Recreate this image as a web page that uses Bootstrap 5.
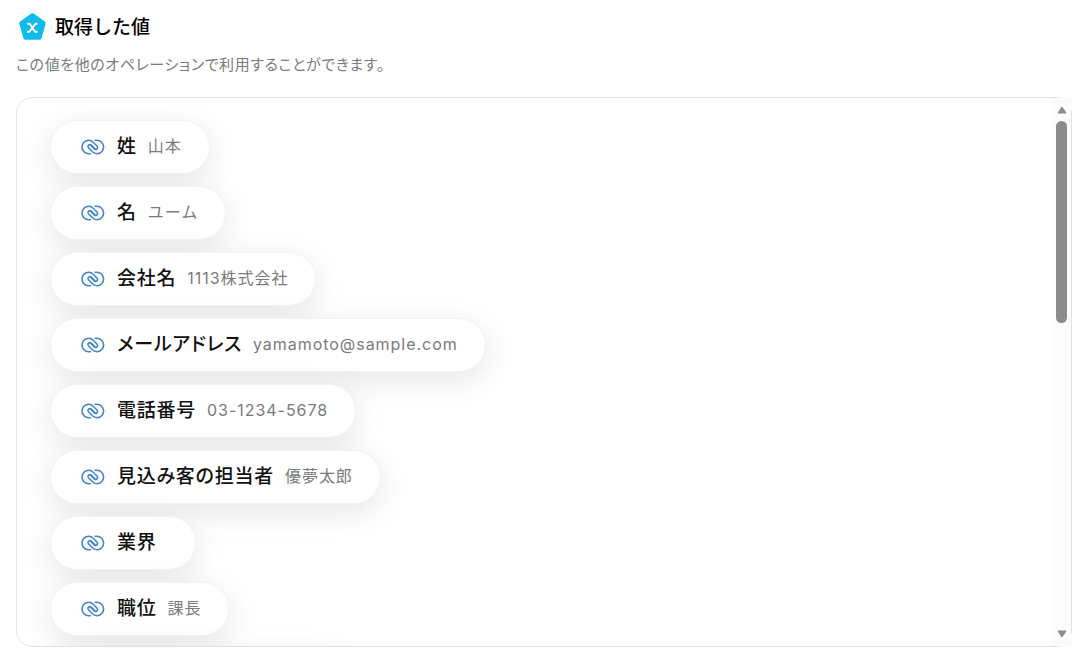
<!DOCTYPE html>
<html lang="ja">
<head>
<meta charset="utf-8">
<meta name="viewport" content="width=device-width, initial-scale=1">
<title>取得した値</title>
<link href="https://cdn.jsdelivr.net/npm/bootstrap@5.3.0/dist/css/bootstrap.min.css" rel="stylesheet">
<style>
  body { font-family: Inter, "Noto Sans CJK JP", sans-serif; color: #1d1d1d; background: #fff; }
  .page { padding: 8px 20px 11px 16px; }
  .page-title { font-size: 19px; line-height: 36px; font-weight: 500; color: #000; }
  .page-title span { padding-top: 2px; }
  .page-note { font-size: 15px; line-height: 22px; color: #7b7b7b; margin: 8px 0 21px; font-feature-settings: "palt"; letter-spacing: .04em; }
  .value-panel { border: 1px solid #e2e2e2; border-radius: 16px; min-height: 0; }
  .value-scroll { overflow-y: auto; scrollbar-width: none; padding: 22px 33px; border-radius: 16px 0 0 16px; min-width: 0; }
  .value-scroll::-webkit-scrollbar { display: none; }
  .value-list { gap: 12px; }
  .value-pill { height: 54px; padding: 0 27px 0 30px; border-radius: 27px; border: 1px solid #f3f3f3; background: #fff; box-shadow: 0 8px 32px rgba(0, 0, 0, .1); white-space: nowrap; }
  .value-pill svg { margin-right: 12px; }
  .value-name { font-size: 19px; line-height: 28px; font-weight: 500; color: #111; margin-right: 11px; font-feature-settings: "palt"; letter-spacing: .04em; }
  .value-data { font-size: 16px; line-height: 26px; color: #7b7b7b; letter-spacing: .06em; padding-bottom: 2px; }
  .value-blank { width: 300px; }
  .scroll-rail { width: 19px; background: #fbfbfb; padding: 8px 0; }
  .scroll-thumb { width: 11px; height: 38%; border-radius: 6px; background: #8b8b8b; margin-top: 7px; }
</style>
</head>
<body>
<svg class="d-none" aria-hidden="true">
  <symbol id="link-icon" viewBox="0 0 24 16">
    <path fill="none" stroke="#4285c8" stroke-width="1.6" stroke-linecap="round" stroke-linejoin="round" d="M9.4 14.7 H7.7 A6.7 6.7 0 0 1 7.7 1.3 C9.5 1.3 11 2 12.2 3.2 L16.2 7.2 A2 2 0 0 1 13.4 10 L9.6 6.2 M14.2 1.3 H15.9 A6.7 6.7 0 0 1 15.9 14.7 C14.1 14.7 12.6 14 11.4 12.8 L7.4 8.8 A2 2 0 0 1 10.2 6 L14 9.8"/>
  </symbol>
</svg>
<main class="page vh-100 d-flex flex-column">
  <header>
    <h1 class="page-title d-flex align-items-center mb-0">
      <svg class="me-2" width="31" height="30" viewBox="0 0 31 30" aria-hidden="true">
        <path d="M16.5 3.2 L27.7 11.1 L23.6 25.8 H9.4 L5.2 11.1 Z" fill="#10bbea" stroke="#10bbea" stroke-width="4" stroke-linejoin="round"/>
        <path d="M11.8 11.8 H13.8 L19 19.8 H20.8 M20.8 11.8 H19.4 L13.2 19.8 H11.8" fill="none" stroke="#fff" stroke-width="1.9" stroke-linecap="round" stroke-linejoin="round"/>
      </svg>
      <span>取得した値</span>
    </h1>
    <p class="page-note">この値を他のオペレーションで利用することができます。</p>
  </header>
  <section class="value-panel flex-grow-1 d-flex" aria-label="取得した値">
    <div class="value-scroll flex-grow-1">
      <ul class="value-list list-unstyled d-flex flex-column align-items-start mb-0">
        <li class="value-pill d-flex align-items-center flex-shrink-0"><svg width="24" height="16" aria-hidden="true"><use href="#link-icon"/></svg><span class="value-name">姓</span><span class="value-data">山本</span></li>
        <li class="value-pill d-flex align-items-center flex-shrink-0"><svg width="24" height="16" aria-hidden="true"><use href="#link-icon"/></svg><span class="value-name">名</span><span class="value-data">ユーム</span></li>
        <li class="value-pill d-flex align-items-center flex-shrink-0"><svg width="24" height="16" aria-hidden="true"><use href="#link-icon"/></svg><span class="value-name">会社名</span><span class="value-data">1113株式会社</span></li>
        <li class="value-pill d-flex align-items-center flex-shrink-0"><svg width="24" height="16" aria-hidden="true"><use href="#link-icon"/></svg><span class="value-name">メールアドレス</span><span class="value-data">yamamoto@sample.com</span></li>
        <li class="value-pill d-flex align-items-center flex-shrink-0"><svg width="24" height="16" aria-hidden="true"><use href="#link-icon"/></svg><span class="value-name">電話番号</span><span class="value-data">03-1234-5678</span></li>
        <li class="value-pill d-flex align-items-center flex-shrink-0"><svg width="24" height="16" aria-hidden="true"><use href="#link-icon"/></svg><span class="value-name">見込み客の担当者</span><span class="value-data">優夢太郎</span></li>
        <li class="value-pill d-flex align-items-center flex-shrink-0"><svg width="24" height="16" aria-hidden="true"><use href="#link-icon"/></svg><span class="value-name">業界</span><span class="value-data"></span></li>
        <li class="value-pill d-flex align-items-center flex-shrink-0"><svg width="24" height="16" aria-hidden="true"><use href="#link-icon"/></svg><span class="value-name">職位</span><span class="value-data">課長</span></li>
        <li class="value-pill value-blank flex-shrink-0"></li>
      </ul>
    </div>
    <div class="scroll-rail d-flex flex-column align-items-center" aria-hidden="true">
      <svg width="10" height="8" viewBox="0 0 10 8"><path d="M5 1 L9 7 H1 Z" fill="#8b8b8b" stroke="#8b8b8b" stroke-linejoin="round"/></svg>
      <div class="scroll-thumb"></div>
      <svg class="mt-auto" width="10" height="8" viewBox="0 0 10 8"><path d="M5 7 L9 1 H1 Z" fill="#8b8b8b" stroke="#8b8b8b" stroke-linejoin="round"/></svg>
    </div>
  </section>
</main>
<script src="https://cdn.jsdelivr.net/npm/bootstrap@5.3.0/dist/js/bootstrap.bundle.min.js"></script>
</body>
</html>
